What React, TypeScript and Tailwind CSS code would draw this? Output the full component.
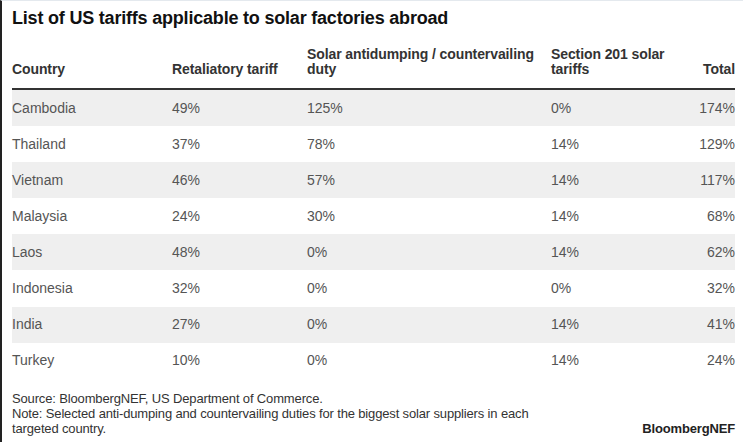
const rows = [
  ["Cambodia", "49%", "125%", "0%", "174%"],
  ["Thailand", "37%", "78%", "14%", "129%"],
  ["Vietnam", "46%", "57%", "14%", "117%"],
  ["Malaysia", "24%", "30%", "14%", "68%"],
  ["Laos", "48%", "0%", "14%", "62%"],
  ["Indonesia", "32%", "0%", "0%", "32%"],
  ["India", "27%", "0%", "14%", "41%"],
  ["Turkey", "10%", "0%", "14%", "24%"],
];

export default function App() {
  return (
    <div className="w-[743px] h-[442px] bg-white border-l-2 border-l-[#222] border-t border-t-[#e4e9ee] font-['Liberation_Sans',Arial,sans-serif] overflow-hidden">
      <div className="pl-[10px] pr-[8px]">
        <h1 className="pt-[6px] text-[18px] leading-[22px] font-bold text-[#111] tracking-[-0.2px]">
          List of US tariffs applicable to solar factories abroad
        </h1>

        <div className="mt-[18px] grid grid-cols-[160px_135px_244px_1fr_auto] items-end pb-[11px] border-b-2 border-[#333] text-[14px] leading-[15px] font-bold text-[#333] tracking-[-0.1px]">
          <div>Country</div>
          <div>Retaliatory tariff</div>
          <div>Solar antidumping / countervailing<br />duty</div>
          <div>Section 201 solar<br />tariffs</div>
          <div className="text-right">Total</div>
        </div>

        <div>
          {rows.map((r, i) => (
            <div
              key={r[0]}
              className={`grid grid-cols-[160px_135px_244px_1fr_auto] items-center h-[36.1px] text-[14px] text-[#555] ${i % 2 === 0 ? "bg-[#efefef]" : "bg-white"}`}
            >
              <div>{r[0]}</div>
              <div>{r[1]}</div>
              <div>{r[2]}</div>
              <div>{r[3]}</div>
              <div className="text-right">{r[4]}</div>
            </div>
          ))}
        </div>

        <div className="mt-[12px] flex justify-between items-end text-[13px] leading-[15px] text-[#333] tracking-[-0.15px]">
          <div>
            <div>Source: BloombergNEF, US Department of Commerce.</div>
            <div>Note: Selected anti-dumping and countervailing duties for the biggest solar suppliers in each</div>
            <div>targeted country.</div>
          </div>
          <div className="font-bold text-[#222]">BloombergNEF</div>
        </div>
      </div>
    </div>
  );
}
